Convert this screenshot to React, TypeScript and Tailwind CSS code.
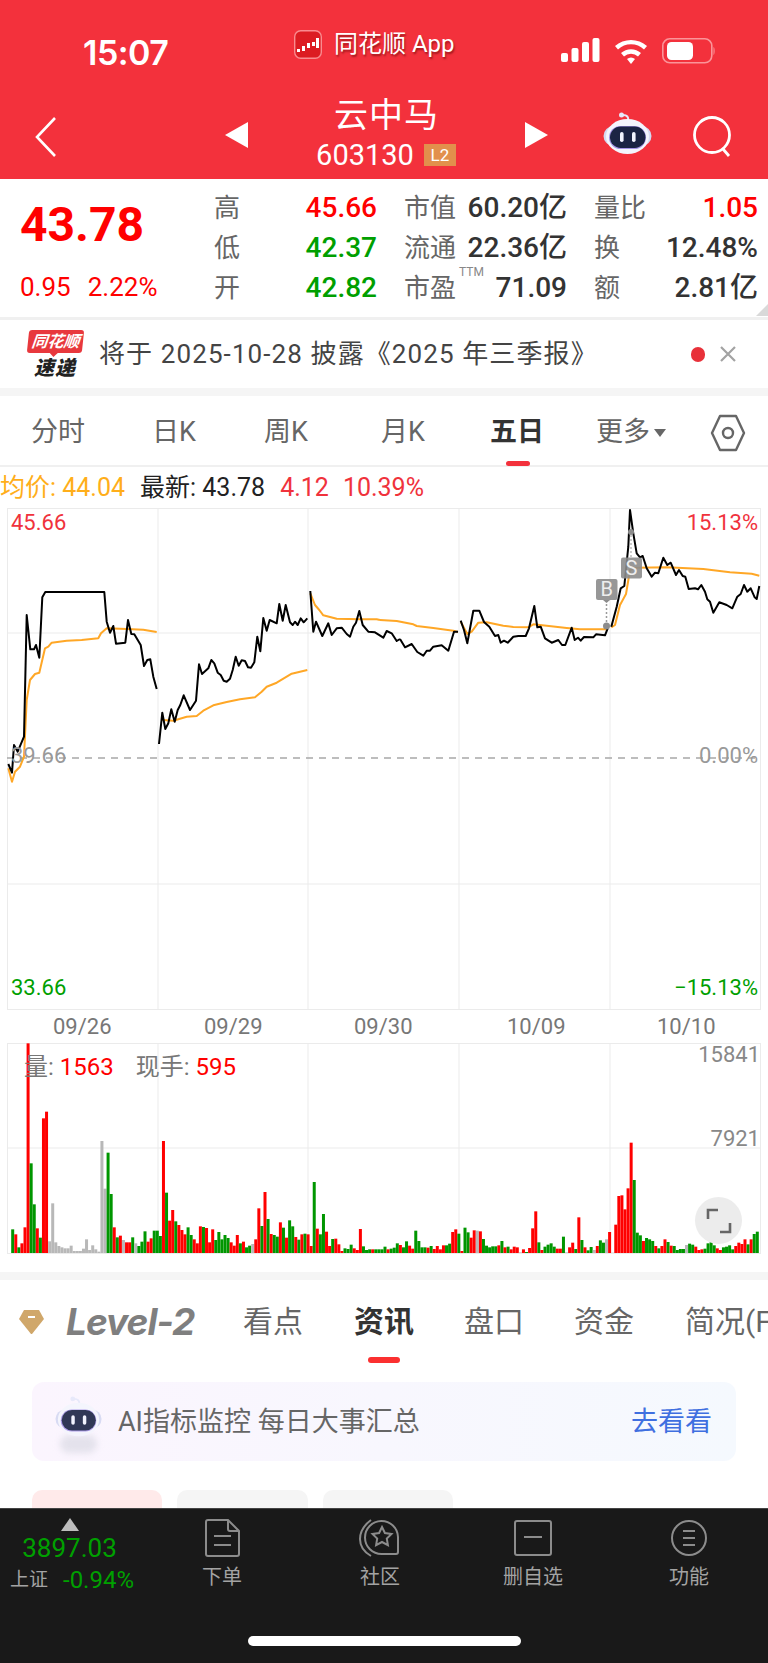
import React from "react";

type Pt = [number, number];

const DIGIT_GREEN = "text-[#009f00]";

// chart traces, page coords derived from 3x crops
const fromLeft = (p: Pt[]) => p.map(([x, y]) => `${(x / 3).toFixed(1)},${(490 + y / 3).toFixed(1)}`).join(" ");
const fromRight = (p: Pt[]) => p.map(([x, y]) => `${(380 + x / 3).toFixed(1)},${(490 + y / 3).toFixed(1)}`).join(" ");

const day1: Pt[] = [[25,822],[36,848],[42,765],[53,785],[72,740],[80,375],[91,478],[102,478],[108,465],[118,503],[127,322],[136,306],[313,306],[320,395],[330,428],[340,408],[348,461],[376,458],[384,390],[394,432],[403,433],[422,465],[432,528],[442,510],[451,508],[460,560],[470,597]];
const day1Avg: Pt[] = [[25,835],[36,875],[45,845],[60,830],[72,800],[80,630],[90,570],[105,552],[118,548],[135,475],[145,470],[155,458],[200,452],[245,450],[295,445],[303,430],[320,415],[380,417],[430,419],[470,426]];
const day2: Pt[] = [[477,762],[487,668],[496,717],[505,700],[514,658],[524,695],[533,660],[541,645],[551,616],[570,660],[588,632],[597,523],[606,552],[625,535],[634,510],[643,520],[653,548],[662,555],[671,572],[680,575],[690,566],[698,540],[707,500],[716,527],[725,511],[735,513],[744,532],[753,533],[763,517],[772,440],[781,484],[790,384],[800,422],[809,390],[830,400],[838,342],[848,392],[857,345],[870,397],[878,405],[885,395],[893,405],[902,385],[911,397],[922,385]];
const day2Avg: Pt[] = [[487,690],[520,692],[560,680],[590,678],[610,662],[640,646],[680,636],[720,628],[765,622],[785,605],[800,590],[830,578],[875,551],[922,540]];
const day3a: Pt[] = [[931,303],[940,425],[948,395],[967,438],[985,400],[995,435],[1010,415],[1025,413],[1040,432],[1050,440],[1060,410],[1068,398],[1078,363],[1088,405],[1105,425],[1125,427],[1150,443],[1160,423],[1175,430],[1190,453],[1200,447]];
const day3b: Pt[] = [[60,447],[75,472],[95,462],[112,486],[130,497],[140,482],[150,482],[160,470],[185,466],[205,482],[222,425],[234,425]];
const day3Avg: Pt[] = [[931,310],[945,345],[958,360],[970,376],[1010,386],[1080,388],[1130,388],[1140,390]];
const day3AvgB: Pt[] = [[0,390],[50,393],[100,403],[110,408],[160,414],[220,422],[234,426]];
const day4: Pt[] = [[242,392],[252,420],[262,460],[280,362],[298,362],[312,396],[328,410],[345,438],[355,435],[362,458],[372,452],[383,458],[400,440],[415,438],[437,438],[447,415],[463,348],[472,412],[482,410],[495,445],[515,458],[535,450],[546,465],[556,465],[575,413],[584,450],[594,443],[602,452],[612,441],[640,442],[648,433],[675,436],[683,415]];
const day4Avg: Pt[] = [[242,395],[262,432],[275,425],[295,398],[320,397],[370,407],[400,411],[445,412],[460,403],[500,407],[560,414],[600,418],[680,418]];
const day5: Pt[] = [[694,410],[710,350],[722,295],[733,288],[745,170],[750,60],[760,130],[770,190],[780,202],[788,198],[800,235],[815,260],[825,248],[835,250],[850,203],[862,225],[872,218],[888,255],[897,240],[908,258],[916,260],[926,297],[945,295],[954,298],[964,285],[975,305],[982,328],[990,335],[1000,368],[1018,337],[1040,345],[1057,355],[1072,320],[1082,312],[1092,285],[1102,305],[1112,295],[1124,322],[1130,327],[1138,288]];
const day5Avg: Pt[] = [[694,412],[705,405],[720,345],[738,312],[750,240],[770,233],[860,232],[970,237],[1050,247],[1115,251],[1138,257]];

const VOL = "g598 r613 g652 r640 r592 r40 g400 g523 r595 g623 r265 r245 s634 s520 s637 s648 s652 s655 s655 s647 s663 s663 s663 s656 s628 s660 s646 s658 s665 s333 s476 g368 g492 r592 g622 r617 s630 r637 r637 g622 s640 g648 g635 g604 r635 r625 g602 g602 g618 r333 g488 r572 r540 g574 r585 r600 r613 g592 g615 r628 r640 r589 g591 r594 r637 r598 g630 g606 g628 g615 g624 r637 r647 r615 g640 r635 g652 g647 s642 r628 r535 g588 r486 g567 r612 g615 g620 r577 g593 r623 g571 g589 r621 g629 r613 g611 r613 r648 g456 r596 g613 g552 r605 r648 g627 r626 r643 r663 g655 g657 g644 r655 r660 r597 g649 g660 g658 r658 g658 g658 g658 g650 r658 g656 g653 g640 r645 g652 g634 r647 r656 g602 g633 g652 g652 r653 g648 r657 r648 r658 r646 g646 g641 r606 r598 g611 r663 g593 g607 r623 r601 s602 r604 g627 g647 g652 g649 g649 r646 g633 r652 g650 r658 r650 r652 s667 r658 g666 r654 r595 r544 g637 r660 g650 g644 g640 g650 r656 r656 g620 s667 r652 r638 g657 r562 g630 r652 g661 g651 s660 r648 g631 g638 s628 r606 s668 r584 r498 r496 r538 r475 r338 g450 g608 g616 r633 g624 g628 g633 r648 g655 r648 r628 g636 r647 g648 g660 g657 g657 s645 g641 g644 r650 r660 r658 g656 g640 g636 g646 r655 r660 g652 g650 g646 g658 r648 r638 r642 r628 g643 r628 g612 g605".split(" ");
const VOL_FILL: Record<string, string> = { r: "#ff0000", g: "#009600", s: "#b8b8b8" };

function Robot() {
  return (
    <svg width="49" height="43" viewBox="0 0 49 43" fill="none">
      <path d="M25 9c1-4-1-6-5-6" stroke="#e6e8fa" strokeWidth="2" />
      <circle cx="18.500" cy="3" r="2.500" fill="#e6e8fa" />
      <rect x="0.500" y="14" width="48" height="20" rx="10" fill="#d5d9f2" />
      <ellipse cx="24.500" cy="24.500" rx="21.500" ry="17.500" fill="#f4f5fd" />
      <rect x="6" y="14" width="37" height="23" rx="11.500" fill="#a595e6" />
      <rect x="7" y="14.500" width="35.500" height="21.500" rx="10.700" fill="#1b2444" />
      <rect x="17" y="20" width="3.600" height="10" rx="1.800" fill="#f2f4ff" />
      <rect x="29" y="20" width="3.600" height="10" rx="1.800" fill="#f2f4ff" />
    </svg>
  );
}

function StatusBar() {
  return (
    <div className="h-[90px] flex items-start relative">
      <div className="w-[83px] shrink-0" />
      <span className="mt-[33px] w-[211px] shrink-0 text-[34px] leading-[40px] font-semibold text-white font-['Inter',sans-serif] tracking-[-0.5px]">15:07</span>
      <svg width="28" height="29" viewBox="0 0 28 29" className="mt-[30px] shrink-0">
        <rect x="0.700" y="0.700" width="26.600" height="27.600" rx="6" fill="#dc1c22" stroke="#f98b8f" strokeWidth="1.400" />
        <path d="M3 19h3v3H3zM8 16h3v5H8zM13 13h3v5h-3zM18 12h3v4h-3zM22 8h3v10h-3z" fill="#fff" />
      </svg>
      <span className="ml-[12px] mt-[24px] text-[24px] leading-[40px] text-white [text-shadow:1px_2px_2px_rgba(90,0,0,0.55)] shrink-0">同花顺 App</span>
      <svg width="156" height="30" viewBox="0 0 156 30" className="ml-[106px] mt-[37px] shrink-0" fill="#fff">
        <rect x="0" y="16" width="7" height="9" rx="2" />
        <rect x="10.500" y="11" width="7" height="14" rx="2" />
        <rect x="21" y="5" width="7" height="20" rx="2" />
        <rect x="31.500" y="1" width="7" height="24" rx="2" />
        <path d="M54 9a24 24 0 0 1 32 0l-3 3.500a19 19 0 0 0-26 0z" />
        <path d="M60 16a15 15 0 0 1 20 0l-3 3.500a10 10 0 0 0-14 0z" />
        <path d="M66 22a6 6 0 0 1 8 0l-4 5z" />
        <rect x="101.800" y="1.800" width="49" height="24" rx="7" fill="none" stroke="#fb9499" strokeWidth="1.600" />
        <rect x="106" y="5" width="26" height="18" rx="4.500" />
        <path d="M152.500 10c1.500.5 1.500 7 0 8z" fill="#fb9499" />
      </svg>
    </div>
  );
}

function NavBar() {
  return (
    <div className="h-[89px] flex items-start relative">
      <svg width="24" height="42" viewBox="0 0 24 42" className="ml-[34px] mt-[26px] shrink-0" fill="none" stroke="#fff" strokeWidth="2.600">
        <path d="M21 2 3 21l18 19" />
      </svg>
      <svg width="24" height="26" viewBox="0 0 24 26" className="ml-[167px] mt-[32px] shrink-0" fill="#fff">
        <path d="M23 0v26L0 13z" />
      </svg>
      <div className="w-[275px] shrink-0 flex flex-col items-center">
        <span className="text-[34px] leading-[50px] text-white tracking-[1px]">云中马</span>
        <div className="flex items-center gap-[10px] mt-[-3px] mr-[1px]">
          <span className="text-[29px] leading-[36px] text-white">603130</span>
          <span className="w-[32px] h-[22px] bg-[#e2904c] text-white text-[17px] leading-[22px] text-center">L2</span>
        </div>
      </div>
      <svg width="24" height="26" viewBox="0 0 24 26" className="mt-[32px] shrink-0" fill="#fff">
        <path d="M1 0v26L24 13z" />
      </svg>
      <div className="ml-[55px] mt-[22px] shrink-0">
        <Robot />
      </div>
      <svg width="44" height="44" viewBox="0 0 44 44" className="ml-[40px] mt-[26px] shrink-0" fill="none" stroke="#fff" strokeWidth="2.800">
        <circle cx="20" cy="19" r="17.500" />
        <path d="m31 33 6 7" />
      </svg>
    </div>
  );
}

function Stat({ label, value, color = "text-[#333]", sup }: { label: string; value: string; color?: string; sup?: boolean }) {
  return (
    <div className="flex justify-between items-center h-[40px]">
      <span className="text-[26px] leading-[32px] text-[#666] whitespace-nowrap relative">
        {label}
        {sup && <span className="absolute left-[55px] top-[-7px] text-[12px] leading-[14px] text-[#888]">TTM</span>}
      </span>
      <span className={`text-[28px] leading-[32px] font-medium whitespace-nowrap ${color}`}>{value}</span>
    </div>
  );
}

function Quote() {
  return (
    <div className="h-[141px] shrink-0 flex relative border-b-[3px] border-[#f0f0f0]">
      <div className="w-[214px] pl-[20px] shrink-0">
        <div className="text-[48px] leading-[60px] mt-[16px] font-bold text-[#ff0000] font-['Roboto',sans-serif]">43.78</div>
        <div className="flex gap-[17px] mt-[16px] text-[26px] leading-[32px] text-[#ff0000]">
          <span>0.95</span>
          <span>2.22%</span>
        </div>
      </div>
      <div className="grid grid-cols-[163px_163px_164px] gap-x-[27px] mt-[9px] h-[120px]">
        <Stat label="高" value="45.66" color="text-[#ff0000]" />
        <Stat label="市值" value="60.20亿" />
        <Stat label="量比" value="1.05" color="text-[#ff0000]" />
        <Stat label="低" value="42.37" color={DIGIT_GREEN} />
        <Stat label="流通" value="22.36亿" />
        <Stat label="换" value="12.48%" />
        <Stat label="开" value="42.82" color={DIGIT_GREEN} />
        <Stat label="市盈" value="71.09" sup />
        <Stat label="额" value="2.81亿" />
      </div>
      <svg width="12" height="12" viewBox="0 0 12 12" className="absolute right-0 bottom-[1px]">
        <path d="M12 0v12H0z" fill="#d9d9d9" />
      </svg>
    </div>
  );
}

function Notice() {
  return (
    <div className="h-[76px] shrink-0 flex items-center border-b-[8px] border-[#f5f5f5]">
      <div className="w-[58px] ml-[26px] flex flex-col items-center shrink-0">
        <div className="w-[55px] h-[23px] bg-[#e8383d] rounded-[3px] -skew-x-6 text-white text-[16px] leading-[23px] text-center font-bold italic relative">
          同花顺
          <span className="absolute left-[23px] top-[23px] w-0 h-0 border-x-[4px] border-x-transparent border-t-[4px] border-t-[#e8383d]" />
        </div>
        <div className="text-[20px] leading-[22px] font-black italic text-[#222] mt-[4px] tracking-[1px]">速递</div>
      </div>
      <span className="ml-[15px] text-[26px] leading-[34px] text-[#444] whitespace-nowrap tracking-[1.100px]">将于 2025-10-28 披露《2025 年三季报》</span>
      <span className="ml-auto w-[14px] h-[15px] rounded-full bg-[#e8313a] shrink-0" />
      <svg width="18" height="18" viewBox="0 0 18 18" className="ml-[14px] mr-[31px] shrink-0" fill="none" stroke="#a3a3a3" strokeWidth="2.200">
        <path d="m2 2 14 14M16 2 2 16" />
      </svg>
    </div>
  );
}

function Tabs() {
  return (
    <div className="h-[71px] shrink-0 pt-[4px] relative flex items-center border-b-[2px] border-[#f0f0f0] text-[27px] text-[#666]">
      <span className="ml-[31px] w-[121px] shrink-0">分时</span>
      <span className="w-[112px] shrink-0">日K</span>
      <span className="w-[117px] shrink-0">周K</span>
      <span className="w-[109px] shrink-0">月K</span>
      <div className="w-[106px] shrink-0 relative">
        <span className="font-bold text-[#333]">五日</span>
        <span className="absolute left-[16px] top-[49px] w-[24px] h-[5px] rounded-full bg-[#f3313c]" />
      </div>
      <span className="shrink-0">更多</span>
      <svg width="12" height="10" viewBox="0 0 12 10" className="ml-[4px] shrink-0" fill="#666">
        <path d="M0 1h12L6 9z" />
      </svg>
      <svg width="36" height="38" viewBox="0 0 36 38" className="ml-[44px] shrink-0" fill="none" stroke="#666" strokeWidth="2.400">
        <path d="M10 2h16l8 17-8 17H10L2 19z" strokeLinejoin="round" />
        <circle cx="18" cy="19" r="5" />
      </svg>
    </div>
  );
}

function PriceChart() {
  const grid = "#ebebeb";
  return (
    <div className="ml-[7px] w-[754px] h-[502px] shrink-0 relative">
      <svg width="754" height="502" viewBox="7 508 754 502" className="block" fill="none">
        <rect x="7.500" y="508.500" width="753" height="501" stroke={grid} />
        <path d="M158 508v501M308 508v501M459 508v501M610 508v501M7 633h753M7 884h753" stroke={grid} />
        <path d="M7 758h753" stroke="#a8a8a8" strokeWidth="1.500" strokeDasharray="7 6" />
        <g stroke="#ffa726" strokeWidth="2" strokeLinejoin="round">
          <polyline points={fromLeft(day1Avg)} />
          <polyline points={fromLeft(day2Avg)} />
          <polyline points={fromLeft(day3Avg)} />
          <polyline points={fromRight(day3AvgB)} />
          <polyline points={fromRight(day4Avg)} />
          <polyline points={fromRight(day5Avg)} />
        </g>
        <g stroke="#000" strokeWidth="2" strokeLinejoin="round">
          <polyline points={fromLeft(day1)} />
          <polyline points={fromLeft(day2)} />
          <polyline points={fromLeft(day3a)} />
          <polyline points={fromRight(day3b)} />
          <polyline points={fromRight(day4)} />
          <polyline points={fromRight(day5)} />
        </g>
        {/* B / S trade markers */}
        <circle cx="606.500" cy="626" r="3.500" fill="#8c8c8c" />
        <path d="M606.500 600v22" stroke="#999" strokeWidth="1.500" strokeDasharray="2 2" />
        <rect x="596" y="579" width="21.500" height="21" rx="2" fill="#8c8c8c" fillOpacity="0.9" />
        <path d="m603 600 3.500 3 3.500-3z" fill="#8c8c8c" />
        <circle cx="631" cy="532" r="3" fill="#8c8c8c" />
        <path d="M631 535v22" stroke="#bbb" strokeWidth="1.500" strokeDasharray="2 2" />
        <rect x="621" y="557.500" width="21" height="21" rx="2" fill="#8c8c8c" fillOpacity="0.9" />
      </svg>
      <span className="absolute left-[589px] top-[71px] w-[21.500px] text-center text-[20px] leading-[21px] text-[#eee]">B</span>
      <span className="absolute left-[614px] top-[49.500px] w-[21px] text-center text-[20px] leading-[21px] text-[#eee]">S</span>
      <span className="absolute left-[4px] top-[2px] text-[22px] leading-[26px] text-[#f0323c]">45.66</span>
      <span className="absolute right-[3px] top-[2px] text-[22px] leading-[26px] text-[#f0323c]">15.13%</span>
      <span className="absolute left-[4px] top-[235px] text-[22px] leading-[26px] text-[#999]">39.66</span>
      <span className="absolute right-[3px] top-[235px] text-[22px] leading-[26px] text-[#999]">0.00%</span>
      <span className={`absolute left-[4px] bottom-[9px] text-[22px] leading-[26px] ${DIGIT_GREEN}`}>33.66</span>
      <span className={`absolute right-[3px] bottom-[9px] text-[22px] leading-[26px] ${DIGIT_GREEN}`}>−15.13%</span>
    </div>
  );
}

function VolumeChart() {
  const grid = "#ebebeb";
  const step = (757.300 - 12.700) / (VOL.length - 1);
  return (
    <div className="ml-[7px] w-[754px] h-[211px] shrink-0 relative">
      <svg width="754" height="211" viewBox="7 1043 754 211" className="block" fill="none">
        <rect x="7.500" y="1043.500" width="753" height="210" stroke={grid} />
        <path d="M158 1043v210M308 1043v210M459 1043v210M610 1043v210M7 1148h753" stroke={grid} />
        {VOL.map((v, i) => {
          const top = 1030 + Number(v.slice(1)) / 3;
          return <rect key={i} x={12.700 + i * step - 1.500} y={top} width="3" height={1253 - top} fill={VOL_FILL[v[0]]} />;
        })}
      </svg>
      <div className="absolute left-[17px] top-[9px] flex gap-[22px] text-[24px] leading-[30px] text-[#777]">
        <span>量: <span className="text-[#ff0000]">1563</span></span>
        <span>现手: <span className="text-[#ff0000]">595</span></span>
      </div>
      <span className="absolute right-[1px] top-[-1px] text-[22px] leading-[26px] text-[#888]">15841</span>
      <span className="absolute right-[1px] top-[83px] text-[22px] leading-[26px] text-[#888]">7921</span>
      <div className="absolute left-[688px] top-[154px] w-[47px] h-[47px] rounded-full bg-[#ececec] flex items-center justify-center">
        <svg width="26" height="26" viewBox="0 0 26 26" fill="none" stroke="#666" strokeWidth="2.600">
          <path d="M2 11V2h10M24 15v9H14" />
        </svg>
      </div>
    </div>
  );
}

function NewsTabs() {
  return (
    <div className="h-[110px] shrink-0 pt-[20px] relative flex items-start border-t-[8px] border-[#f5f5f5] text-[30px] leading-[44px] text-[#666] whitespace-nowrap">
      <svg width="27" height="26" viewBox="0 0 27 26" className="ml-[18px] mt-[9px] shrink-0">
        <path d="M6 1h15l5 9-12 15h-1L1 10z" fill="#d0a76a" />
        <path d="M10 8h7" stroke="#fff" strokeWidth="2" />
      </svg>
      <span className="ml-[21px] w-[177px] shrink-0 text-[37px] leading-[44px] font-bold italic text-[#7f7f7f] font-['Inter',sans-serif] tracking-[-1px]">Level-2</span>
      <span className="w-[111px] shrink-0">看点</span>
      <div className="w-[110px] shrink-0 relative">
        <span className="font-bold text-[#333]">资讯</span>
        <span className="absolute left-[14px] top-[57px] w-[32px] h-[6px] rounded-full bg-[#fb3030]" />
      </div>
      <span className="w-[110px] shrink-0">盘口</span>
      <span className="w-[111px] shrink-0">资金</span>
      <span className="shrink-0">简况(F10)</span>
    </div>
  );
}

function AiBanner() {
  return (
    <div className="mx-[32px] h-[79px] rounded-[12px] bg-gradient-to-r from-[#fbf5fe] to-[#f5f9fe] flex items-center">
      <div className="ml-[23px] mt-[-9px] relative shrink-0 w-[47px]">
        <span className="absolute left-[5px] top-[39px] w-[37px] h-[18px] rounded-full bg-[#e4e2ec] blur-[3px]" />
        <div className="relative scale-[0.96] origin-top-left opacity-90">
          <Robot />
        </div>
      </div>
      <span className="ml-[16px] text-[27px] leading-[34px] text-[#666]">AI指标监控 每日大事汇总</span>
      <span className="ml-auto mr-[24px] text-[27px] leading-[34px] text-[#3f6fe0]">去看看</span>
    </div>
  );
}

function TabItem({ label, icon, width }: { label: string; icon: React.ReactNode; width: string }) {
  return (
    <div className={`flex flex-col items-center pt-[10px] shrink-0 ${width}`}>
      <div className="h-[38px] flex items-center justify-center">{icon}</div>
      <span className="mt-[6px] text-[20px] leading-[28px] text-[#a3a3a3]">{label}</span>
    </div>
  );
}

function BottomBar() {
  return (
    <div className="h-[155px] shrink-0 bg-[#191919] border-t-[1px] border-[#444] relative flex items-start">
      <div className="w-[148px] shrink-0 pt-[8px] flex flex-col items-center">
        <svg width="18" height="14" viewBox="0 0 18 14" fill="#bdbdbd" className="mr-[9px]">
          <path d="M9 1 18 14H0z" />
        </svg>
        <span className="text-[26px] leading-[34px] text-[#00a000] mr-[9px]">3897.03</span>
        <div className="flex items-center gap-[15px] mt-[1px] whitespace-nowrap mr-[4px]">
          <span className="text-[19px] leading-[28px] text-[#a3a3a3]">上证</span>
          <span className="text-[24px] leading-[28px] text-[#00a000]">-0.94%</span>
        </div>
      </div>
      <TabItem
        width="w-[148px]"
        label="下单"
        icon={
          <svg width="35" height="38" viewBox="0 0 35 38" fill="none" stroke="#8c8c8c" strokeWidth="2">
            <path d="M3 1h20l11 11v23a2 2 0 0 1-2 2H3a2 2 0 0 1-2-2V3a2 2 0 0 1 2-2z" />
            <path d="M23 1v9a2 2 0 0 0 2 2h9M9 17h17M9 26h17" />
          </svg>
        }
      />
      <TabItem
        width="w-[168px]"
        label="社区"
        icon={
          <svg width="40" height="38" viewBox="0 0 40 38" fill="none" stroke="#8c8c8c" strokeWidth="2" className="mr-[3px]">
            <path d="M39 18a16.500 16.500 0 1 0-16.500 17H37a2 2 0 0 0 2-2z" />
            <path d="M12 1C4 7 1 13 1 20c0 7 4 13 11 17" />
            <path d="M23 8l2.900 6 6.600 1-4.700 4.600 1.100 6.500-5.900-3.100-5.900 3.100 1.100-6.500-4.700-4.600 6.600-1z" />
          </svg>
        }
      />
      <TabItem
        width="w-[138px]"
        label="删自选"
        icon={
          <svg width="38" height="36" viewBox="0 0 38 36" fill="none" stroke="#8c8c8c" strokeWidth="2">
            <rect x="1" y="1" width="36" height="34" rx="2" />
            <path d="M10 17h18" />
          </svg>
        }
      />
      <TabItem
        width="w-[120px] ml-[27px]"
        label="功能"
        icon={
          <svg width="36" height="36" viewBox="0 0 36 36" fill="none" stroke="#8c8c8c" strokeWidth="2">
            <circle cx="18" cy="18" r="17" />
            <path d="M12 11h12M12 18h12M12 25h12" />
          </svg>
        }
      />
      <div className="absolute left-[248px] top-[127px] w-[273px] h-[10px] rounded-full bg-white" />
    </div>
  );
}

export default function App() {
  return (
    <div className="w-[768px] h-[1663px] flex flex-col overflow-hidden bg-white font-['Roboto','Noto_Sans_CJK_SC',sans-serif]">
      <div className="h-[179px] shrink-0 bg-[#f3313c]">
        <StatusBar />
        <NavBar />
      </div>
      <Quote />
      <Notice />
      <Tabs />
      <div className="h-[41px] shrink-0 flex items-center text-[25px] leading-[32px] whitespace-nowrap">
        <span className="text-[#ffae1a]">均价: 44.04</span>
        <span className="ml-[15px] text-[#222]">最新: 43.78</span>
        <span className="ml-[15px] text-[#f0323c]">4.12</span>
        <span className="ml-[14px] text-[#f0323c]">10.39%</span>
      </div>
      <PriceChart />
      <div className="h-[33px] shrink-0 relative text-[22px] leading-[33px] text-[#777] flex">
        <span className="ml-[53px] w-[151px]">09/26</span>
        <span className="w-[150px]">09/29</span>
        <span className="w-[153px]">09/30</span>
        <span className="w-[150px]">10/09</span>
        <span>10/10</span>
      </div>
      <VolumeChart />
      <div className="h-[18px] shrink-0" />
      <NewsTabs />
      <div className="flex-1 min-h-0 overflow-hidden">
        <AiBanner />
        <div className="mt-[29px] mx-[32px] flex gap-[15px]">
          <div className="w-[130px] h-[40px] rounded-[10px] bg-[#ffeaea]" />
          <div className="w-[131px] h-[40px] rounded-[10px] bg-[#f5f5f5]" />
          <div className="w-[130px] h-[40px] rounded-[10px] bg-[#f5f5f5]" />
        </div>
      </div>
      <BottomBar />
    </div>
  );
}
